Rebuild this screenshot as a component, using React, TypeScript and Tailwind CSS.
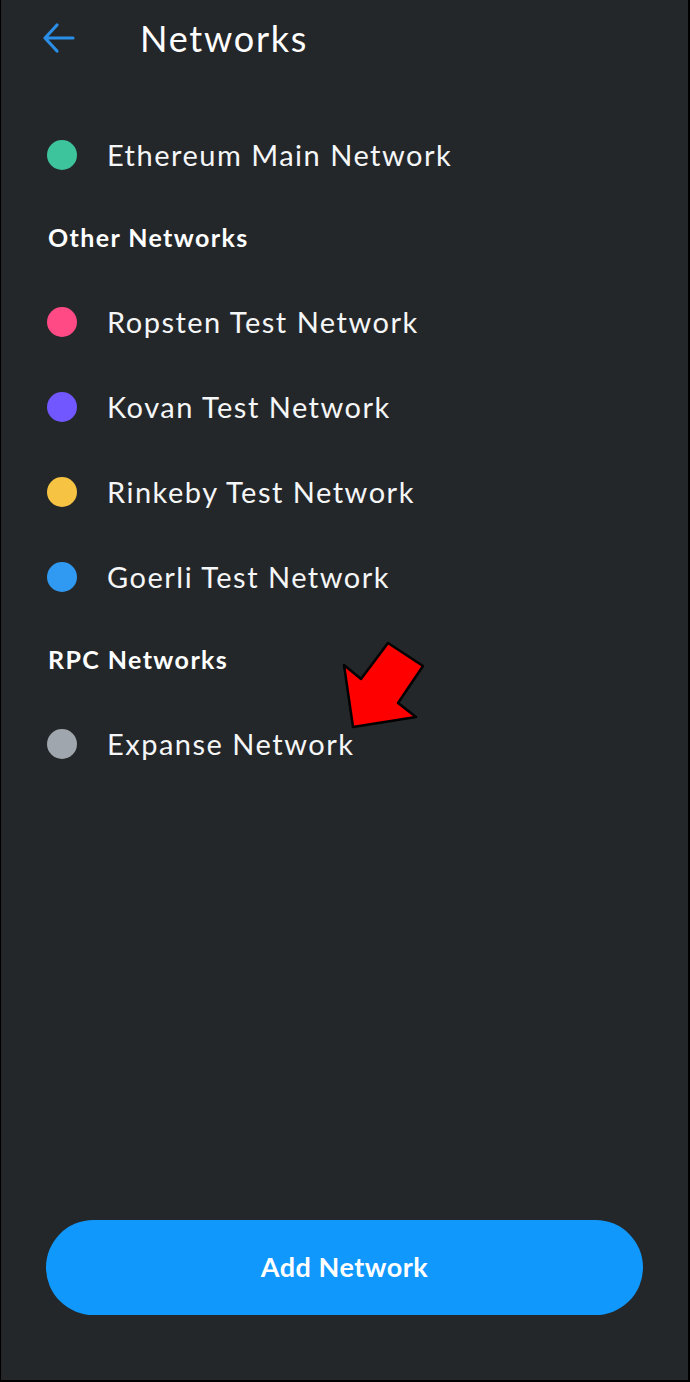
const font = { fontFamily: "Lato, 'Open Sans', sans-serif" };

type Net = { name: string; color: string };

const mainNet: Net = { name: "Ethereum Main Network", color: "bg-[#3ec49c]" };

const otherNets: Net[] = [
  { name: "Ropsten Test Network", color: "bg-[#ff4a85]" },
  { name: "Kovan Test Network", color: "bg-[#7057ff]" },
  { name: "Rinkeby Test Network", color: "bg-[#f6c343]" },
  { name: "Goerli Test Network", color: "bg-[#3099f2]" },
];

const rpcNets: Net[] = [{ name: "Expanse Network", color: "bg-[#9fa6ae]" }];

function NetworkRow({ net }: { net: Net }) {
  return (
    <div className="flex h-[85px] items-center">
      <span className={`ml-[46px] h-[30px] w-[30px] shrink-0 rounded-full ${net.color}`} />
      <span className="ml-[30px] text-[29px] tracking-[1.5px] text-[#f5f6f7]">
        {net.name}
      </span>
    </div>
  );
}

function SectionTitle({ children }: { children: string }) {
  return (
    <div className="flex h-[82px] items-center pl-[47px] text-[25px] font-bold tracking-[1.4px] text-white">
      {children}
    </div>
  );
}

export default function App() {
  return (
    <div
      style={font}
      className="relative flex min-h-[1382px] w-[690px] flex-col border-r-2 border-b-2 border-l border-black bg-[#24272a]"
    >
      <header className="flex h-[76px] items-center">
        <svg
          className="ml-[40px]"
          width="36"
          height="34"
          viewBox="0 0 36 34"
          fill="none"
          stroke="#2b8ee6"
          strokeWidth="3.2"
          strokeLinecap="round"
          strokeLinejoin="round"
        >
          <path d="M32 17H4M16 4L4 17l12 13" />
        </svg>
        <h1 className="ml-[63px] text-[36px] tracking-[1.75px] text-white">Networks</h1>
      </header>

      <div className="mt-[36px]">
        <NetworkRow net={mainNet} />
        <SectionTitle>Other Networks</SectionTitle>
        {otherNets.map((n) => (
          <NetworkRow key={n.name} net={n} />
        ))}
        <SectionTitle>RPC Networks</SectionTitle>
        {rpcNets.map((n) => (
          <NetworkRow key={n.name} net={n} />
        ))}
      </div>

      <div className="mt-auto px-[45px] pb-[65px]">
        <button className="flex h-[95px] w-full items-center justify-center rounded-full bg-[#1098fc] text-[27px] font-bold tracking-[0.5px] text-white">
          Add Network
        </button>
      </div>

      <svg
        className="absolute left-[338px] top-[638px]"
        width="92"
        height="96"
        viewBox="338 638 92 96"
      >
        <polygon
          points="343,665 360,679 387,643 422,666 397,703 415,717 352,727"
          fill="#ff0000"
          stroke="#000"
          strokeWidth="2.5"
          strokeLinejoin="round"
        />
      </svg>
    </div>
  );
}
